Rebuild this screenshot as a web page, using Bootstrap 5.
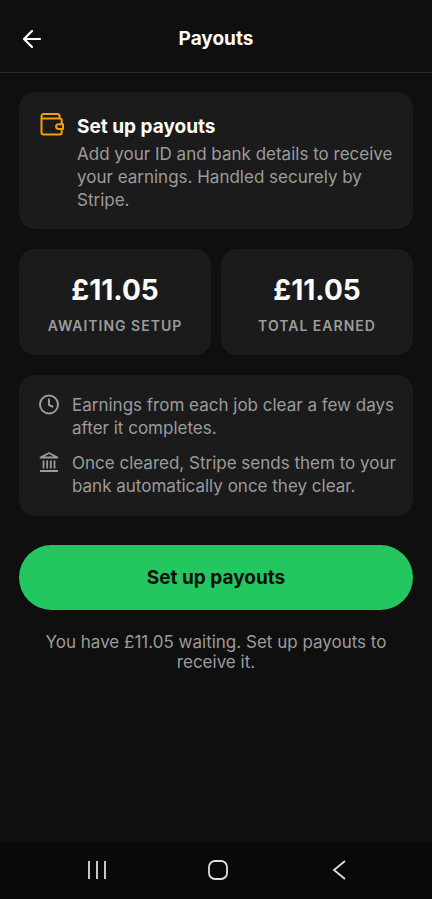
<!DOCTYPE html>
<html lang="en" data-bs-theme="dark">
<head>
<meta charset="utf-8">
<meta name="viewport" content="width=device-width, initial-scale=1">
<title>Payouts</title>
<link href="https://cdn.jsdelivr.net/npm/bootstrap@5.3.0/dist/css/bootstrap.min.css" rel="stylesheet">
<style>
  body { background: #0f0f0f; color: #fff; font-family: Inter, "Noto Sans", sans-serif; font-size: 17px; line-height: 23px; }
  svg { display: block; flex: none; fill: none; stroke: currentColor; }
  .topbar { padding: 23px 16px 17px; border-bottom: 1px solid #2b2b2b; }
  .topbar h1 { font-size: 19px; line-height: 32px; }
  .topbar .btn, .topbar .spacer { width: 32px; height: 32px; }
  .content { padding: 19px; gap: 20px; }
  .panel { background: #1b1b1b; border-radius: 16px; padding: 20px; }
  .panel h2, .setup { font-size: 19px; line-height: 29px; }
  .panel h2 { margin-bottom: 2px; }
  .soft { color: #9b9b9b; }
  .setup-row { gap: 12px; padding-bottom: 17px; }
  .wallet { color: #f59e0b; }
  .stats { gap: 10px; }
  .stats dd { font-size: 28px; line-height: 42px; }
  .stats dt { font-size: 14px; line-height: 18px; letter-spacing: 1px; margin-top: 6px; }
  .facts { gap: 12px; padding: 19px 12px 18px 20px; }
  .facts li { gap: 11px; }
  .setup { background: #24c660; color: #0f0f0f; padding: 18px; margin-top: 9px; }
  .setup:hover { background: #20b557; color: #0f0f0f; }
  .waiting { line-height: 20px; padding: 0 19px; margin-top: 2px; }
  .sysbar { background: #090909; padding: 12px 33px 13px 37px; }
  .sysbar .btn { width: 120px; height: 32px; color: #dedede; }
</style>
</head>
<body>
<div class="d-flex flex-column min-vh-100">
  <header class="topbar d-flex align-items-center justify-content-between">
    <button type="button" class="btn p-0 border-0 d-flex align-items-center justify-content-center text-white" aria-label="Back">
      <svg width="20" height="20" viewBox="0 0 20 20" stroke-width="2.200" stroke-linecap="round" stroke-linejoin="round"><path d="M18 10H2M10 2L2 10l8 8"/></svg>
    </button>
    <h1 class="fw-bold m-0">Payouts</h1>
    <span class="spacer"></span>
  </header>

  <main class="content d-flex flex-column flex-grow-1">
    <section class="panel setup-row d-flex">
      <svg class="wallet" width="26" height="26" viewBox="0 0 26 26" stroke-width="2" stroke-linecap="round" stroke-linejoin="round"><path d="M20.500 6V4a2 2 0 0 0-2-2H4.500a2 2 0 0 0-2 2v16.500a2 2 0 0 0 2 2h16.200a2 2 0 0 0 2-2V17M2.500 4.500a2 2 0 0 0 2 2h16.200a2 2 0 0 1 2 2V12M24 12.200h-4.500a2.400 2.400 0 0 0 0 4.800H24z"/></svg>
      <div>
        <h2 class="fw-bold mt-0">Set up payouts</h2>
        <p class="soft m-0">Add your ID and bank details to receive your earnings. Handled securely by Stripe.</p>
      </div>
    </section>

    <dl class="stats d-flex m-0 text-center">
      <div class="panel flex-fill d-flex flex-column-reverse w-50">
        <dt class="soft fw-semibold text-uppercase">Awaiting setup</dt>
        <dd class="fw-bold m-0">£11.05</dd>
      </div>
      <div class="panel flex-fill d-flex flex-column-reverse w-50">
        <dt class="soft fw-semibold text-uppercase">Total earned</dt>
        <dd class="fw-bold m-0">£11.05</dd>
      </div>
    </dl>

    <ul class="panel facts list-unstyled d-flex flex-column m-0 soft">
      <li class="d-flex">
        <svg width="22" height="22" viewBox="0 0 22 22" stroke-width="2" stroke-linecap="round" stroke-linejoin="round"><circle cx="10" cy="10.500" r="9"/><path d="M10 5.500v5.500l3.500 1.500"/></svg>
        <span>Earnings from each job clear a few days after it completes.</span>
      </li>
      <li class="d-flex">
        <svg width="22" height="22" viewBox="0 0 22 22" stroke-width="1.800" stroke-linejoin="round"><path d="M1.500 5.500L10 1 18.500 5.500zM4.500 8.500v8M8.200 8.500v8M11.800 8.500v8M15.500 8.500v8M1 19h18"/></svg>
        <span>Once cleared, Stripe sends them to your bank automatically once they clear.</span>
      </li>
    </ul>

    <button type="button" class="setup btn rounded-pill border-0 fw-bold w-100">Set up payouts</button>
    <p class="waiting soft text-center mb-0">You have £11.05 waiting. Set up payouts to receive it.</p>
  </main>

  <nav class="sysbar d-flex justify-content-between" aria-label="System">
    <button type="button" class="btn p-0 border-0 d-flex align-items-center justify-content-center" aria-label="Recent apps">
      <svg width="20" height="20" viewBox="0 0 20 20" stroke-width="1.800"><path d="M2 1v18M10 1v18M18 1v18"/></svg>
    </button>
    <button type="button" class="btn p-0 border-0 d-flex align-items-center justify-content-center" aria-label="Home">
      <svg width="20" height="20" viewBox="0 0 20 20" stroke-width="1.800"><rect x="1" y="1" width="18" height="18" rx="6"/></svg>
    </button>
    <button type="button" class="btn p-0 border-0 d-flex align-items-center justify-content-center" aria-label="Back to previous app">
      <svg width="20" height="20" viewBox="0 0 20 20" stroke-width="1.800"><path d="M16 1L5 10l11 9"/></svg>
    </button>
  </nav>
</div>
<script src="https://cdn.jsdelivr.net/npm/bootstrap@5.3.0/dist/js/bootstrap.bundle.min.js"></script>
</body>
</html>
